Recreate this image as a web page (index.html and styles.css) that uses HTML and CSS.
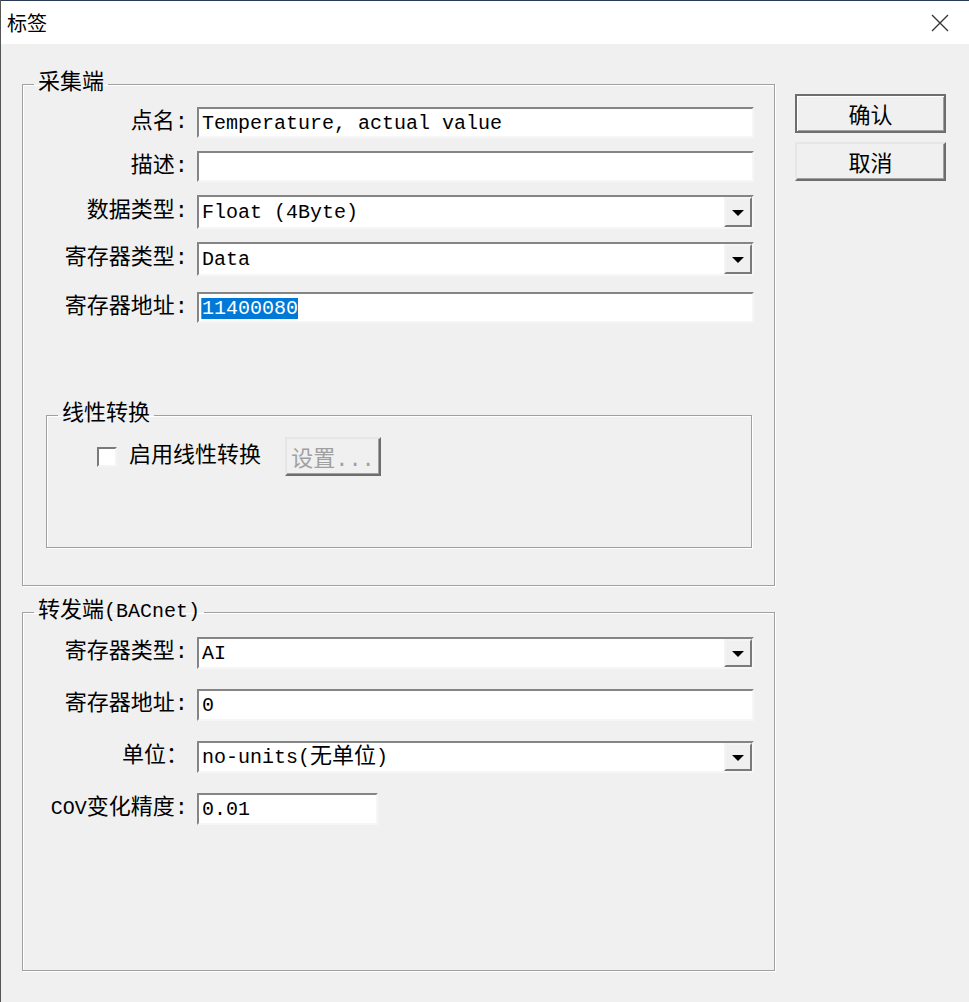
FILE: index.html
```html
<!DOCTYPE html>
<html lang="zh-CN">
<head>
    <meta charset="UTF-8">
    <title>标签</title>
    <link rel="stylesheet" href="styles.css">
</head>
<body>

    <div class="window">

        <!-- Title bar -->
        <div class="titlebar">
            <span class="title">标签</span>
            <svg class="close" width="18" height="18" viewBox="0 0 18 18">
                <path d="M1 1 L17 17 M17 1 L1 17" stroke="#333" stroke-width="1.3" fill="none"/>
            </svg>
        </div>

        <div class="client">

            <div class="main">

                <!-- Source side -->
                <fieldset class="group group-collect">
                    <legend>采集端</legend>

                    <div class="row">
                        <label class="label">点名:</label>
                        <div class="field">Temperature, actual value</div>
                    </div>
                    <div class="row">
                        <label class="label">描述:</label>
                        <div class="field"></div>
                    </div>
                    <div class="row row-combo">
                        <label class="label">数据类型:</label>
                        <div class="field combo">
                            <span class="value">Float (4Byte)</span>
                            <span class="drop"><i class="arrow"></i></span>
                        </div>
                    </div>
                    <div class="row row-combo">
                        <label class="label">寄存器类型:</label>
                        <div class="field combo">
                            <span class="value">Data</span>
                            <span class="drop"><i class="arrow"></i></span>
                        </div>
                    </div>
                    <div class="row row-addr">
                        <label class="label">寄存器地址:</label>
                        <div class="field"><span class="sel">11400080</span></div>
                    </div>

                    <fieldset class="group sub">
                        <legend>线性转换</legend>
                        <div class="check-row">
                            <span class="check"></span>
                            <span class="check-label">启用线性转换</span>
                            <button class="btn btn-disabled" disabled>设置...</button>
                        </div>
                    </fieldset>
                </fieldset>

                <!-- Forwarding side -->
                <fieldset class="group group-forward">
                    <legend>转发端<span class="latin">(BACnet)</span></legend>

                    <div class="row row-combo">
                        <label class="label">寄存器类型:</label>
                        <div class="field combo">
                            <span class="value">AI</span>
                            <span class="drop"><i class="arrow"></i></span>
                        </div>
                    </div>
                    <div class="row">
                        <label class="label">寄存器地址:</label>
                        <div class="field">0</div>
                    </div>
                    <div class="row row-combo">
                        <label class="label">单位：</label>
                        <div class="field combo">
                            <span class="value">no-units(<span class="cjk">无单位</span>)</span>
                            <span class="drop"><i class="arrow"></i></span>
                        </div>
                    </div>
                    <div class="row">
                        <label class="label"><span class="latin">COV</span>变化精度:</label>
                        <div class="field field-short">0.01</div>
                    </div>
                </fieldset>

            </div>

            <!-- Dialog buttons -->
            <div class="actions">
                <button class="btn btn-default">确认</button>
                <button class="btn">取消</button>
            </div>

        </div>
    </div>

</body>
</html>
```

FILE: styles.css
```css
body {
    margin: 0;
    background-color: #f0f0f0;
    font-family: "Liberation Mono", "Noto Sans CJK SC", monospace;
    color: #000;
}

/* Window frame */
.window {
    width: 969px;
    height: 1002px;
    box-sizing: border-box;
    border-left: 1px solid #555;
    background-color: #f0f0f0;
}

.titlebar {
    height: 44px;
    box-sizing: border-box;
    border-top: 1px solid #2b3a57;
    background-color: #ffffff;
    display: flex;
    align-items: center;
    justify-content: space-between;
    padding: 0 20px 0 6px;
}

.title {
    font-family: "Noto Sans CJK SC", sans-serif;
    font-size: 20px;
    line-height: 24px;
}

/* Client area: groups on the left, buttons on the right */
.client {
    display: grid;
    grid-template-columns: 753px 151px;
    column-gap: 20px;
    align-items: start;
    padding: 28px 0 0 21px;
}

/* Group boxes */
.group {
    margin: 0;
    padding: 11px 0 0 0;
    min-width: 0;
    box-sizing: border-box;
    border: 1px solid #a0a0a0;
    box-shadow: inset 1px 1px 0 #ffffff, 1px 1px 0 #ffffff;
}

.group legend {
    margin-left: 11px;
    padding: 0 4px;
    font-size: 22px;
    line-height: 24px;
}

.group-collect {
    height: 514px;
}

.group-forward {
    height: 371px;
    margin-top: 14px;
    padding-top: 13px;
}

.sub {
    width: 706px;
    height: 145px;
    margin: 80px 0 0 23px;
    padding-top: 10px;
}

.latin {
    font-size: 20px;
}

.cjk {
    font-size: 22px;
}

/* Label + field rows */
.row {
    display: flex;
    align-items: center;
    height: 31px;
}

.row + .row {
    margin-top: 13px;
}

.row-combo {
    height: 34px;
}

.group-collect .row-addr {
    margin-top: 16px;
}

.group-forward .row {
    height: 32px;
}

.group-forward .row + .row {
    margin-top: 20px;
}

.label {
    width: 165px;
    margin-right: 9px;
    text-align: right;
    font-size: 22px;
    line-height: 24px;
    white-space: nowrap;
}

.field {
    width: 557px;
    height: 100%;
    box-sizing: border-box;
    display: flex;
    align-items: center;
    padding: 2px 0 0 3px;
    background-color: #ffffff;
    border: 2px solid;
    border-color: #858585 #f6f6f6 #f6f6f6 #858585;
    font-size: 20px;
    line-height: 24px;
    white-space: pre;
}

.field-short {
    width: 181px;
}

.combo {
    padding-top: 0;
}

.combo .value {
    flex: 1;
    padding-top: 2px;
}

.drop {
    width: 28px;
    align-self: stretch;
    box-sizing: border-box;
    display: flex;
    align-items: center;
    justify-content: center;
    background-color: #f0f0f0;
    border: 2px solid;
    border-color: #f4f4f4 #7a7a7a #7a7a7a #f4f4f4;
}

.arrow {
    width: 0;
    height: 0;
    margin-top: 2px;
    border-left: 6px solid transparent;
    border-right: 6px solid transparent;
    border-top: 6px solid #000;
}

.sel {
    background-color: #0078d7;
    color: #ffffff;
    line-height: 21px;
    box-shadow: -1px 0 0 #e07a2a;
}

/* Linear conversion row */
.check-row {
    display: flex;
    align-items: center;
    height: 39px;
    padding-left: 50px;
}

.check {
    width: 20px;
    height: 20px;
    box-sizing: border-box;
    background-color: #ffffff;
    border: 2px solid;
    border-color: #7a7a7a #f4f4f4 #f4f4f4 #7a7a7a;
}

.check-label {
    margin-left: 12px;
    font-size: 22px;
    line-height: 24px;
}

/* Buttons */
.actions {
    display: flex;
    flex-direction: column;
    gap: 9px;
    margin-top: 22px;
}

.btn {
    width: 151px;
    height: 39px;
    padding: 0;
    font-family: "Liberation Mono", "Noto Sans CJK SC", monospace;
    font-size: 22px;
    color: #000;
    background-color: #f0f0f0;
    border: 2px solid;
    border-color: #e6e6e6 #6d6d6d #6d6d6d #e6e6e6;
    box-shadow: inset -1px -1px 0 #a0a0a0;
}

.btn-default {
    border-color: #6d6d6d;
    box-shadow: inset 1px 1px 0 #ffffff, inset -1px -1px 0 #a0a0a0;
}

.btn-disabled {
    width: 96px;
    margin-left: 24px;
    color: #a0a0a0;
}
```
